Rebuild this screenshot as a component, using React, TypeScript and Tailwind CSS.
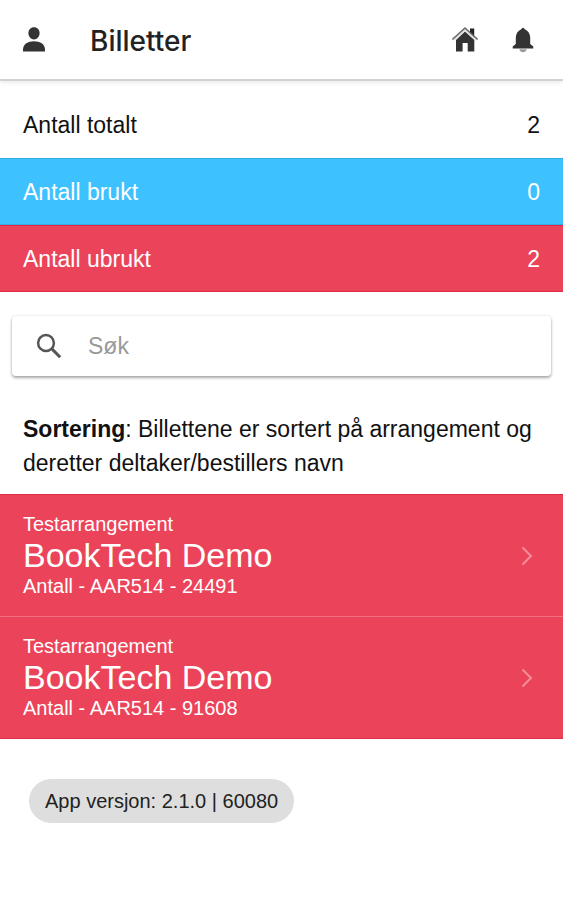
import React from "react";

type Tone = "plain" | "blue" | "red";

const tones: Record<Tone, string> = {
  plain: "bg-white text-[#111111]",
  blue: "bg-[#3dc2ff] text-white border-y border-[#36abe0]",
  red: "bg-[#eb445a] text-white border-y border-[#e22a46]",
};

const totals: { label: string; value: number; tone: Tone }[] = [
  { label: "Antall totalt", value: 2, tone: "plain" },
  { label: "Antall brukt", value: 0, tone: "blue" },
  { label: "Antall ubrukt", value: 2, tone: "red" },
];

const tickets = [
  { event: "Testarrangement", name: "BookTech Demo", details: "Antall - AAR514 - 24491" },
  { event: "Testarrangement", name: "BookTech Demo", details: "Antall - AAR514 - 91608" },
];

function PersonIcon() {
  return (
    <svg viewBox="0 0 28 28" className="size-7" fill="#333333" aria-hidden="true">
      <path d="M14 1.200c3.300 0 5.600 2.500 5.600 5.900S17.200 13.600 14 13.600 8.400 10.500 8.400 7.100 10.700 1.200 14 1.200z" />
      <path d="M3 25.500v-1.700c0-5.700 5-8.500 11-8.500s11 2.800 11 8.500v1.700z" />
    </svg>
  );
}

function HomeIcon() {
  return (
    <svg viewBox="0 0 28 28" className="size-7" aria-hidden="true">
      <path d="M19 2.500h4.200v10L19 8z" fill="#222222" />
      <path d="M14 5.500 23.300 14v11.500h-6.600V17h-5.100v8.500H5V14z" fill="#333333" />
      <path d="M2.500 14.200 14 3.700l11.500 10.500" fill="none" stroke="#dddddd" strokeWidth="1.800" />
      <path d="M1.800 13 14 2l12.200 11" fill="none" stroke="#666666" strokeWidth="1.500" strokeLinecap="round" strokeLinejoin="round" />
    </svg>
  );
}

function BellIcon() {
  return (
    <svg viewBox="0 0 28 28" className="size-7" aria-hidden="true">
      <path d="M14 1.800c1 .2 1.300 1 2.200 1.600 3.200 1.500 5 4.600 5 8.300v6.300l3.100 2.600v1.800H3.700v-1.800L6.800 18v-6.300c0-3.700 1.800-6.800 5-8.300.9-.6 1.200-1.400 2.200-1.600z" fill="#333333" />
      <path d="M10.300 23.200h7.400c-.5 1.900-1.900 3-3.700 3s-3.200-1.100-3.700-3z" fill="#999999" />
    </svg>
  );
}

function SearchIcon() {
  return (
    <svg viewBox="0 0 26 26" className="size-[26px] shrink-0" fill="none" stroke="#555555" aria-hidden="true">
      <circle cx="10" cy="10" r="7.900" strokeWidth="2.500" />
      <path d="m15.600 15.600 8.600 8.600" strokeWidth="3" />
    </svg>
  );
}

function Chevron() {
  return (
    <svg viewBox="0 0 12 20" className="h-5 w-3 shrink-0" fill="none" stroke="#f28d9a" strokeWidth="2" aria-hidden="true">
      <path d="m1.500 1.500 8.500 8.500-8.500 8.500" />
    </svg>
  );
}

export default function App() {
  return (
    <div className="min-h-screen bg-white font-['Liberation_Sans',Arial,sans-serif] text-[#111111]">
      <header className="flex h-[81px] items-center border-b-2 border-[#d2d2d2] pr-[26px] pl-5 shadow-[0_2px_4px_rgba(0,0,0,0.08)]">
        <button type="button" aria-label="Profil">
          <PersonIcon />
        </button>
        <h1 className="ml-[42px] flex-1 pt-[2px] font-['Inter',sans-serif] text-[28px] leading-8 font-medium text-[#222222]">Billetter</h1>
        <button type="button" aria-label="Hjem">
          <HomeIcon />
        </button>
        <button type="button" aria-label="Varsler" className="ml-[30px]">
          <BellIcon />
        </button>
      </header>

      <main>
        <dl className="pt-[10px] text-[23px] leading-8">
          {totals.map((row) => (
            <div key={row.label} className={`flex h-[67px] items-center justify-between px-[23px] ${tones[row.tone]}`}>
              <dt>{row.label}</dt>
              <dd>{row.value}</dd>
            </div>
          ))}
        </dl>

        <label className="mx-3 mt-6 flex h-[60px] items-center rounded-sm bg-white pl-6 shadow-[0_2px_3px_rgba(0,0,0,0.32),0_0_3px_rgba(0,0,0,0.12)]">
          <SearchIcon />
          <input
            type="search"
            aria-label="Søk"
            placeholder="Søk"
            className="ml-[26px] min-w-0 flex-1 bg-transparent text-[23px] leading-8 outline-none placeholder:text-[#999999]"
          />
        </label>

        <p className="mt-9 px-[23px] text-[23px] leading-[34px]">
          <strong>Sortering</strong>: Billettene er sortert på arrangement og deretter deltaker/bestillers navn
        </p>

        <ul className="mt-[14px] border-y border-[#e22a46] bg-[#eb445a] text-white">
          {tickets.map((ticket, index) => (
            <li key={ticket.details} className={index > 0 ? "border-t border-[#ef7080]" : ""}>
              <a href={`#${index + 1}`} className="flex h-[121px] items-center justify-between pr-[30px] pl-[23px]">
                <div className="pb-[2px]">
                  <p className="text-[20px] leading-6">{ticket.event}</p>
                  <h2 className="text-[34px] leading-[38px]">{ticket.name}</h2>
                  <p className="text-[20px] leading-6">{ticket.details}</p>
                </div>
                <Chevron />
              </a>
            </li>
          ))}
        </ul>

        <div className="mt-10 ml-[29px] inline-flex h-11 items-center rounded-full bg-[#dedede] px-4 text-[20px] leading-6 text-[#222222]">
          App versjon: 2.1.0 | 60080
        </div>
      </main>
    </div>
  );
}
